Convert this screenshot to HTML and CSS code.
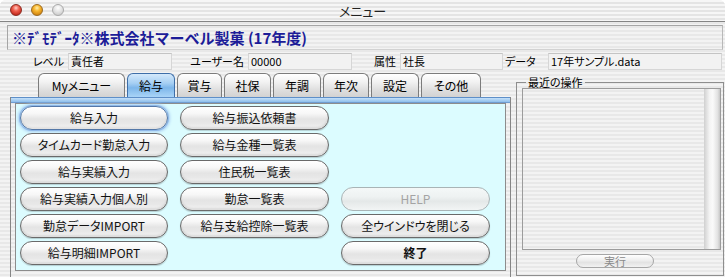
FILE: index.html
```html
<!DOCTYPE html>
<html lang="ja">
<head>
<meta charset="utf-8">
<title>メニュー</title>
<link rel="stylesheet" href="styles.css">
</head>
<body>
<div class="window">
  <div class="titlebar">
    <div class="lights">
      <span class="light red"></span>
      <span class="light yellow"></span>
      <span class="light off"></span>
    </div>
    <div class="title">メニュー</div>
    <div></div>
  </div>

  <div class="company">※ﾃﾞﾓﾃﾞｰﾀ※株式会社マーベル製菓 (17年度)</div>

  <div class="info">
    <span class="lbl">レベル</span><span class="fld">責任者</span>
    <span class="lbl">ユーザー名</span><span class="fld">00000</span>
    <span class="lbl">属性</span><span class="fld">社長</span>
    <span class="lbl lbl-left">データ</span><span class="fld">17年サンプル.data</span>
  </div>

  <div class="main">
    <div class="tabarea">
      <div class="tabs">
        <div class="tab w87">Myメニュー</div>
        <div class="tab w48 active">給与</div>
        <div class="tab w45">賞与</div>
        <div class="tab w47">社保</div>
        <div class="tab w48">年調</div>
        <div class="tab w46">年次</div>
        <div class="tab w48">設定</div>
        <div class="tab w60">その他</div>
      </div>
      <div class="panel">
        <div class="strip"></div>
        <div class="panel-pad">
          <div class="panel-body">
            <div class="grid">
              <button class="btn focus c1 r1">給与入力</button>
              <button class="btn c1 r2">タイムカード勤怠入力</button>
              <button class="btn c1 r3">給与実績入力</button>
              <button class="btn c1 r4">給与実績入力個人別</button>
              <button class="btn c1 r5">勤怠データIMPORT</button>
              <button class="btn c1 r6">給与明細IMPORT</button>
              <button class="btn c2 r1">給与振込依頼書</button>
              <button class="btn c2 r2">給与金種一覧表</button>
              <button class="btn c2 r3">住民税一覧表</button>
              <button class="btn c2 r4">勤怠一覧表</button>
              <button class="btn c2 r5">給与支給控除一覧表</button>
              <button class="btn c3 r4 disabled">HELP</button>
              <button class="btn c3 r5">全ウインドウを閉じる</button>
              <button class="btn c3 r6 bold">終了</button>
            </div>
          </div>
        </div>
      </div>
    </div>

    <fieldset class="recent">
      <legend>最近の操作</legend>
      <div class="list"><div class="scroll"></div></div>
      <div class="exec-row"><button class="small-btn">実行</button></div>
    </fieldset>
  </div>
</div>
</body>
</html>
```

FILE: styles.css
```css
html, body {
  margin: 0;
  padding: 0;
  background: #ffffff;
}
body {
  width: 725px;
  height: 277px;
  overflow: hidden;
  font-family: "Noto Sans CJK JP", "Noto Sans", sans-serif;
  font-feature-settings: "palt";
  color: #000;
}
.window {
  width: 725px;
  height: 277px;
  border-radius: 6px 6px 0 0;
  overflow: hidden;
  background: repeating-linear-gradient(to bottom, #f3f3f3 0 2px, #e8e8e8 2px 4px);
}

/* title bar */
.titlebar {
  height: 21px;
  border-bottom: 1px solid #858585;
  display: grid;
  grid-template-columns: 1fr auto 1fr;
  align-items: center;
  background: repeating-linear-gradient(to bottom, #f6f6f6 0 2px, #e4e4e4 2px 4px);
}
.lights {
  display: flex;
  gap: 9px;
  padding-left: 10px;
  align-items: center;
  margin-top: -2px;
}
.light {
  width: 12px;
  height: 12px;
  border-radius: 50%;
  box-sizing: border-box;
}
.red {
  background: radial-gradient(circle at 50% 30%, #ffd0c8 0, #f06050 35%, #b81c10 90%);
  border: 1px solid #8a2a20;
}
.yellow {
  background: radial-gradient(circle at 50% 30%, #fff0b0 0, #f8b830 35%, #c87808 90%);
  border: 1px solid #9a6a20;
}
.off {
  background: radial-gradient(circle at 50% 30%, #ffffff 0, #e4e4e4 45%, #c4c4c4 95%);
  border: 1px solid #a8a8a8;
}
.title {
  font-size: 13px;
  line-height: 21px;
  color: #222;
}

/* company placard */
.company {
  margin: 3px 2px 0 7px;
  height: 23px;
  border: 1px solid #a6a6a6;
  border-bottom-color: #d2d2d2;
  border-right-color: #b8b8b8;
  padding-left: 4px;
  font-size: 15px;
  font-weight: bold;
  line-height: 23px;
  color: #1c1c98;
  font-feature-settings: normal;
  white-space: nowrap;
}

/* info row */
.info {
  margin-top: 3px;
  margin-left: 8px;
  height: 17px;
  display: grid;
  grid-template-columns: 60px 104px 76px 104px 48px 103px 45px 174px;
  font-size: 11px;
  line-height: 17px;
}
.lbl {
  text-align: right;
  padding-right: 4px;
  white-space: nowrap;
}
.lbl-left {
  text-align: left;
  padding-left: 2px;
  padding-right: 0;
}
.fld {
  box-sizing: border-box;
  background: #f2f2f2;
  border: 1px solid #d6d6d6;
  border-top-color: #c4c4c4;
  padding-left: 2px;
  line-height: 15px;
  white-space: nowrap;
}

/* main area */
.main {
  margin-top: 3px;
  display: flex;
  align-items: flex-start;
}
.tabarea {
  margin-left: 10px;
  width: 501px;
}
.tabs {
  display: flex;
  gap: 2px;
  padding-left: 28px;
  height: 24px;
}
.tab {
  box-sizing: border-box;
  height: 24px;
  border: 1px solid #7c7c7c;
  border-bottom: none;
  border-radius: 6px 6px 0 0;
  background: linear-gradient(to bottom, #ffffff 0%, #f2f2f2 35%, #dedede 70%, #d2d2d2 100%);
  font-size: 12px;
  line-height: 23px;
  text-align: center;
  white-space: nowrap;
}
.tab.active {
  border-color: #3e6ea8;
  background: linear-gradient(to bottom, #d4e9fb 0%, #a6cff3 40%, #7db6ea 60%, #a9d4f7 100%);
}
.w87 { width: 87px; }
.w48 { width: 48px; }
.w45 { width: 45px; }
.w47 { width: 47px; }
.w46 { width: 46px; }
.w60 { width: 60px; }

.panel {
  border: 1px solid #868686;
  border-top: none;
}
.strip {
  height: 4px;
  border-top: 1px solid #5e8fc8;
  border-bottom: 1px solid #6f9cd0;
  background: linear-gradient(to bottom, #c4e0f9, #8ebfeb);
}
.panel-pad {
  padding: 0 4px 6px 4px;
}
.panel-body {
  border: 1px solid #8c8c8c;
  background: #dcfcff;
  height: 164px;
  padding: 2px 4px 0 4px;
}
.grid {
  display: grid;
  grid-template-columns: 148px 149px 149px;
  grid-template-rows: repeat(6, 24px);
  column-gap: 12px;
  row-gap: 3px;
}
.c1 { grid-column: 1; }
.c2 { grid-column: 2; }
.c3 { grid-column: 3; }
.r1 { grid-row: 1; }
.r2 { grid-row: 2; }
.r3 { grid-row: 3; }
.r4 { grid-row: 4; }
.r5 { grid-row: 5; }
.r6 { grid-row: 6; }

.btn {
  margin: 0;
  padding: 0;
  height: 24px;
  border: 1px solid #6a6a6a;
  border-radius: 12px;
  background: linear-gradient(to bottom, #ffffff 0%, #f7f7f7 30%, #e4e4e4 55%, #e8e8e8 75%, #f6f6f6 100%);
  box-shadow: inset 0 -2px 2px rgba(0,0,0,0.10), 0 1px 1px rgba(0,0,0,0.18);
  font-family: "Noto Sans CJK JP", "Noto Sans", sans-serif;
  font-feature-settings: "palt";
  font-size: 12px;
  line-height: 22px;
  color: #111;
  text-align: center;
  white-space: nowrap;
}
.btn.focus {
  border-color: #5478a8;
  box-shadow: 0 0 0 1px #8fb8e8, 0 0 3px 2px #a9cdf2, inset 0 -2px 2px rgba(0,0,0,0.08);
}
.btn.disabled {
  color: #a4a4a4;
  border-color: #a9b4b6;
  background: linear-gradient(to bottom, #f4f8f8 0%, #eef2f2 40%, #e4e8e8 60%, #f2f5f5 100%);
  box-shadow: none;
}
.btn.bold {
  font-weight: bold;
}

/* recent operations */
.recent {
  margin: 3px 0 0 5px;
  padding: 0 0 7px 0;
  width: 208px;
  box-sizing: border-box;
  border: 1px solid #8e8e8e;
  min-width: 0;
}
.recent legend {
  margin-left: 9px;
  padding: 0 2px;
  font-size: 11px;
  line-height: 12px;
}
.list {
  margin: 0 2px 0 5px;
  height: 162px;
  box-sizing: border-box;
  border: 1px solid #9c9c9c;
  display: flex;
  justify-content: flex-end;
}
.scroll {
  width: 16px;
  height: 100%;
  background: linear-gradient(to right, #d0d0d0 0%, #f4f4f4 35%, #fafafa 55%, #e2e2e2 85%, #c6c6c6 100%);
}
.exec-row {
  margin-top: 4px;
  display: flex;
}
.small-btn {
  margin: 0 0 0 59px;
  padding: 0;
  width: 78px;
  height: 14px;
  border: 1px solid #a6a6a6;
  border-radius: 7px;
  background: linear-gradient(to bottom, #ffffff, #ececec 50%, #e2e2e2 60%, #f2f2f2);
  font-family: "Noto Sans CJK JP", "Noto Sans", sans-serif;
  font-size: 11px;
  line-height: 12px;
  color: #8a8a8a;
}
```
